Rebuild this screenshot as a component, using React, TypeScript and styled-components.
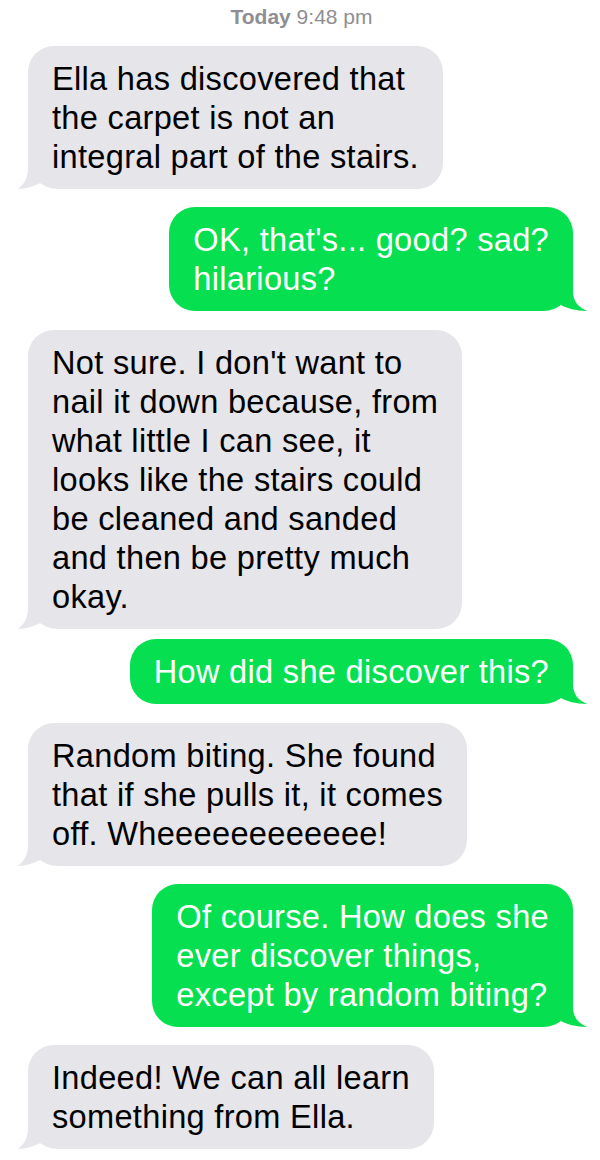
import React from 'react';
import styled, { createGlobalStyle } from 'styled-components';

const Global = createGlobalStyle`
  html, body { margin: 0; padding: 0; background: #ffffff; }
  body { font-family: "Liberation Sans", Arial, Helvetica, sans-serif; -webkit-font-smoothing: antialiased; }
`;

const Screen = styled.div`
  width: 600px;
  height: 1160px;
  overflow: hidden;
  display: flex;
  flex-direction: column;
  background: #ffffff;
`;

const Stamp = styled.div`
  text-align: center;
  font-size: 21px;
  line-height: 34px;
  color: #8e8e93;
  padding-left: 3px;
  b { font-weight: 700; }
`;

const Row = styled.div<{ $me: boolean; $gap: number }>`
  display: flex;
  justify-content: ${p => (p.$me ? 'flex-end' : 'flex-start')};
  padding: 0 27px 0 28px;
  margin-top: ${p => p.$gap}px;
`;

const Bubble = styled.div<{ $me: boolean }>`
  position: relative;
  padding: 13px 24px;
  border-radius: 26px;
  ${p => (p.$me ? 'border-bottom-right-radius: 30px;' : 'border-bottom-left-radius: 30px;')}
  background: ${p => (p.$me ? '#05df50' : '#e5e5ea')};
  color: ${p => (p.$me ? '#ffffff' : '#000000')};
  font-size: 32.6px;
  line-height: 39px;
  letter-spacing: 0.3px;
  white-space: nowrap;
`;

const TailSvg = styled.svg<{ $me: boolean; $ext: number }>`
  position: absolute;
  bottom: 0;
  ${p => (p.$me ? `right: -${p.$ext}px; transform: scaleX(-1);` : `left: -${p.$ext}px;`)}
  display: block;
`;

const Tail: React.FC<{ me: boolean; color: string }> = ({ me, color }) => {
  const e = me ? 15 : 11;
  const w = e + 12;
  const d = `M${e},0 L${w},0 L${w},26 C${w - 6},29.5 ${e - 2},31.6 0.5,32 C${e - 5},28.5 ${e},22 ${e},12 Z`;
  return (
    <TailSvg $me={me} $ext={e} width={w} height={32} viewBox={`0 0 ${w} 32`}>
      <path d={d} fill={color} />
    </TailSvg>
  );
};

type Msg = { me: boolean; gap: number; lines: string[] };

const messages: Msg[] = [
  { me: false, gap: 12, lines: ['Ella has discovered that', 'the carpet is not an', 'integral part of the stairs.'] },
  { me: true, gap: 18, lines: ["OK, that's... good? sad?", 'hilarious?'] },
  {
    me: false,
    gap: 19,
    lines: [
      "Not sure. I don't want to",
      'nail it down because, from',
      'what little I can see, it',
      'looks like the stairs could',
      'be cleaned and sanded',
      'and then be pretty much',
      'okay.',
    ],
  },
  { me: true, gap: 10, lines: ['How did she discover this?'] },
  { me: false, gap: 19, lines: ['Random biting. She found', 'that if she pulls it, it comes', 'off. Wheeeeeeeeeeee!'] },
  { me: true, gap: 18, lines: ['Of course. How does she', 'ever discover things,', 'except by random biting?'] },
  { me: false, gap: 18, lines: ['Indeed! We can all learn', 'something from Ella.'] },
];

export default function App() {
  return (
    <Screen>
      <Global />
      <Stamp>
        <b>Today</b> 9:48 pm
      </Stamp>
      {messages.map((m, i) => (
        <Row key={i} $me={m.me} $gap={m.gap}>
          <Bubble $me={m.me}>
            {m.lines.map((l, j) => (
              <React.Fragment key={j}>
                {j > 0 && <br />}
                {l}
              </React.Fragment>
            ))}
            <Tail me={m.me} color={m.me ? '#05df50' : '#e5e5ea'} />
          </Bubble>
        </Row>
      ))}
    </Screen>
  );
}
